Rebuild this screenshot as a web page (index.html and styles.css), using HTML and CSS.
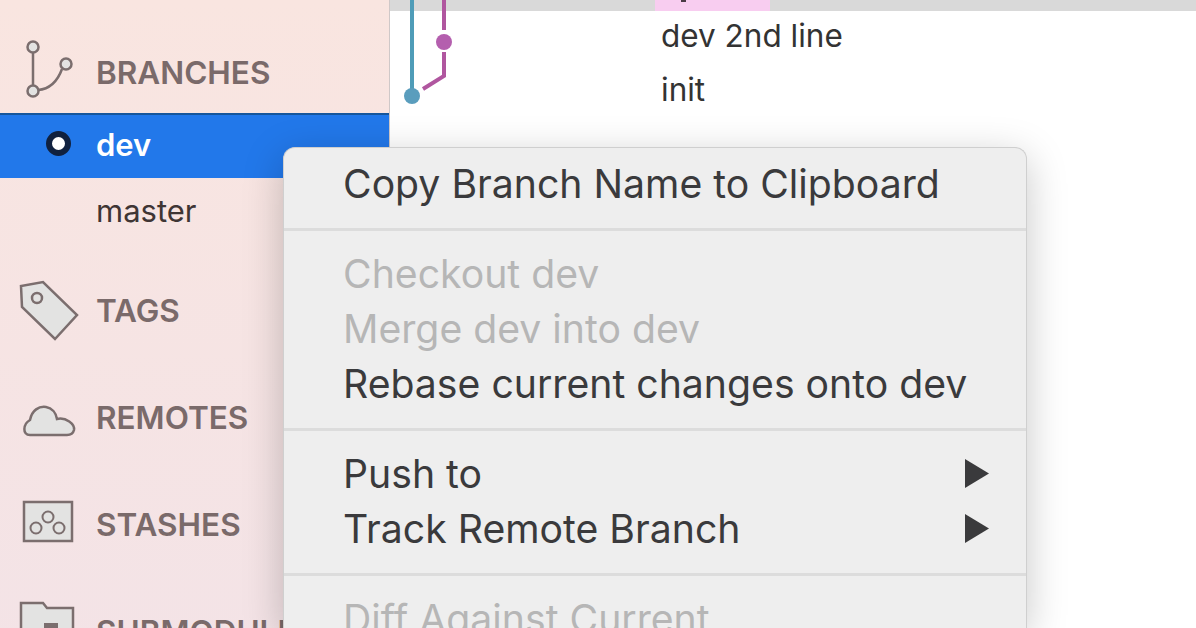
FILE: index.html
```html
<!DOCTYPE html>
<html lang="en">
<head>
  <meta charset="UTF-8">
  <title>Branches</title>
  <link rel="stylesheet" href="styles.css">
</head>
<body>
  <div class="app">
    <aside class="sidebar">
      <div class="section section-first">
        <svg class="section-icon" viewBox="0 0 80 107">
          <path class="ico" d="M33 36V70M38 74C50 73 58 64 62 53"/>
          <circle class="ico ico-fill" cx="33" cy="31" r="5.5"/>
          <circle class="ico ico-fill" cx="33" cy="75" r="5.5"/>
          <circle class="ico ico-fill" cx="66" cy="48" r="5.5"/>
        </svg>
        <span class="section-name">BRANCHES</span>
      </div>
      <div class="branch branch-active"><span class="head-dot"></span>dev</div>
      <div class="branch branch-last">master</div>
      <div class="section">
        <svg class="section-icon" viewBox="0 0 80 107">
          <path class="ico ico-fill" d="M21 29L22 50L55 82L77 58L43 25Z"/>
          <circle class="ico ico-plain" cx="37" cy="41" r="5"/>
        </svg>
        <span class="section-name">TAGS</span>
      </div>
      <div class="section">
        <svg class="section-icon" viewBox="0 0 80 107">
          <path class="ico ico-fill" d="M30 71C22 71 23 60 30 56C32 46 39 42 46 43C52 44 56 49 57 55C66 53 75 60 74 66C73 70 71 71 67 71Z"/>
        </svg>
        <span class="section-name">REMOTES</span>
      </div>
      <div class="section">
        <svg class="section-icon" viewBox="0 0 80 107">
          <rect class="ico ico-fill" x="24" y="31" width="48" height="39"/>
          <circle class="ico ico-thin" cx="48" cy="46" r="5.5"/>
          <circle class="ico ico-thin" cx="36" cy="57" r="5.5"/>
          <circle class="ico ico-thin" cx="59" cy="57" r="5.5"/>
        </svg>
        <span class="section-name">STASHES</span>
      </div>
      <div class="section">
        <svg class="section-icon" viewBox="0 0 80 107">
          <path class="ico ico-fill" d="M21 82V25H43L47 30H73V82Z"/>
          <rect class="ico-solid" x="44" y="45" width="14" height="6"/>
        </svg>
        <span class="section-name">SUBMODULES</span>
      </div>
    </aside>

    <main class="history">
      <div class="row row-selected"><span class="tag"><i class="descender"></i></span></div>
      <div class="row">dev 2nd line</div>
      <div class="row">init</div>
      <svg class="graph" width="70" height="110" viewBox="0 0 70 110">
        <path class="lane-blue" d="M22 0V92"/>
        <path class="lane-pink" d="M54 0V30M54 52V76L33 89"/>
        <circle class="node-pink" cx="54" cy="42" r="8"/>
        <circle class="node-blue" cx="22" cy="96" r="8"/>
      </svg>
    </main>
  </div>

  <div class="menu">
    <div class="menu-item">Copy Branch Name to Clipboard</div>
    <div class="menu-sep"></div>
    <div class="menu-item menu-off">Checkout dev</div>
    <div class="menu-item menu-off">Merge dev into dev</div>
    <div class="menu-item">Rebase current changes onto dev</div>
    <div class="menu-sep"></div>
    <div class="menu-item">Push to <svg class="arrow" viewBox="0 0 24 29"><path d="M0 0L24 14.5L0 29Z"/></svg></div>
    <div class="menu-item">Track Remote Branch <svg class="arrow" viewBox="0 0 24 29"><path d="M0 0L24 14.5L0 29Z"/></svg></div>
    <div class="menu-sep"></div>
    <div class="menu-item menu-off">Diff Against Current</div>
  </div>
</body>
</html>
```

FILE: styles.css
```css
html, body {
  margin: 0;
  padding: 0;
  height: 628px;
  overflow: hidden;
  background-color: #fff;
  font-family: Inter, "Liberation Sans", sans-serif;
}

.app {
  display: flex;
  height: 628px;
}

.sidebar {
  width: 389px;
  height: 700px;
  flex-shrink: 0;
  border-right: 1px solid #cfc8c8;
  background: linear-gradient(#f9e5e0, #f3e3e7);
}

.section {
  display: flex;
  align-items: center;
  height: 107px;
}

.section-first {
  height: 113px;
  padding-top: 31px;
  box-sizing: border-box;
}

.section-first .section-icon {
  margin-top: -5px;
}

.section-icon {
  width: 80px;
  height: 107px;
  margin-right: 16px;
  flex-shrink: 0;
}

.section-name {
  font-size: 31.5px;
  font-weight: 600;
  color: #7a6a6a;
}

.ico {
  fill: none;
  stroke: #7b6e6e;
  stroke-width: 2.5;
}

.ico-fill {
  fill: #e3e3e2;
}

.ico-thin {
  stroke-width: 2;
}

.ico-solid {
  fill: #7b6e6e;
}

.branch {
  display: flex;
  align-items: center;
  height: 65px;
  padding-left: 96px;
  position: relative;
  font-size: 31px;
  color: #3f3534;
}

.branch-active {
  background-color: #2278ea;
  border-top: 2px solid #16569c;
  box-sizing: border-box;
  padding-bottom: 4px;
  color: #fff;
  font-weight: 600;
}

.branch-last {
  margin-bottom: 14px;
}

.head-dot {
  position: absolute;
  left: 46px;
  top: 16px;
  width: 13px;
  height: 13px;
  border: 6px solid #10213f;
  border-radius: 50%;
  background-color: #fff;
}

.history {
  position: relative;
  flex: 1;
}

.row {
  height: 55px;
  padding-left: 271px;
  margin-top: -1px;
  display: flex;
  align-items: center;
  font-size: 31.5px;
  color: #333;
}

.row:nth-child(2) {
  margin-top: -3px;
}

.row-selected {
  height: 11px;
  margin-top: 0;
  padding-left: 0;
  background-color: #d9d9d9;
  position: relative;
}

.tag {
  position: absolute;
  left: 265px;
  top: 0;
  width: 115px;
  height: 11px;
  background-color: #f8cdf0;
}

.descender {
  position: absolute;
  left: 26px;
  top: 0;
  width: 5px;
  height: 2px;
  background-color: #4a3a45;
}

.graph {
  position: absolute;
  left: 0;
  top: 0;
}

.lane-blue {
  fill: none;
  stroke: #4f9cb8;
  stroke-width: 4;
}

.lane-pink {
  fill: none;
  stroke: #b0569f;
  stroke-width: 4;
}

.node-blue {
  fill: #5a9dbd;
}

.node-pink {
  fill: #b45fae;
}

.menu {
  position: absolute;
  left: 283px;
  top: 147px;
  width: 744px;
  height: 481px;
  padding-top: 9px;
  box-sizing: border-box;
  background-color: #eeeeee;
  border-radius: 12px 12px 0 0;
  border: 1px solid #cfcfcf;
  border-bottom: none;
  box-shadow: 0 10px 40px rgba(0, 0, 0, 0.22);
  overflow: hidden;
}

.menu-item {
  display: flex;
  align-items: center;
  justify-content: space-between;
  height: 55px;
  box-sizing: border-box;
  padding: 0 37px 2px 59px;
  font-size: 39.2px;
  color: #3a3a3c;
  white-space: nowrap;
}

.menu-off {
  color: #b6b6b6;
}

.menu-sep {
  height: 3px;
  margin: 16px 0;
  background-color: #dcdcdc;
}

.arrow {
  width: 24px;
  height: 29px;
  fill: #3a3a3c;
}
```
